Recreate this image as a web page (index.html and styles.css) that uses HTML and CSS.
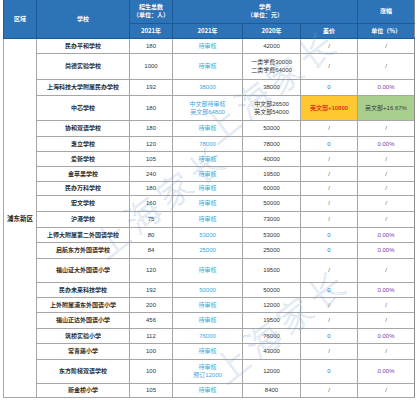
FILE: index.html
```html
<!DOCTYPE html>
<html lang="zh-CN">
<head>
<meta charset="utf-8">
<title>浦东新区民办学校学费</title>
<link rel="stylesheet" href="styles.css">
</head>
<body>
<div class="wrap">
<table class="fees">
  <colgroup>
    <col class="c-area"><col class="c-school"><col class="c-num"><col class="c-f21"><col class="c-f20"><col class="c-diff"><col class="c-rate">
  </colgroup>
  <thead>
    <tr class="h1">
      <th rowspan="2">区域</th>
      <th rowspan="2">学校</th>
      <th>招生总数<br>（单位：人）</th>
      <th colspan="3">学费<br>（单位：元）</th>
      <th>涨幅</th>
    </tr>
    <tr class="h2">
      <th>2021年</th>
      <th>2021年</th>
      <th>2020年</th>
      <th>差价</th>
      <th>单位（%）</th>
    </tr>
  </thead>
  <tbody>
    <tr class="r15">
      <td class="area" rowspan="21">浦东新区</td>
      <td class="sch">民办平和学校</td><td>180</td><td class="f21">待审核</td><td>42000</td><td class="na">/</td><td class="na">/</td>
    </tr>
    <tr class="r26">
      <td class="sch">尚德实验学校</td><td>1000</td><td class="f21">待审核</td><td>一类学费30000<br>二类学费64000</td><td class="na">/</td><td class="na">/</td>
    </tr>
    <tr class="r16">
      <td class="sch">上海科技大学附属民办学校</td><td>192</td><td class="f21">38000</td><td>38000</td><td class="zero">0</td><td class="pct">0.00%</td>
    </tr>
    <tr class="r25">
      <td class="sch">中芯学校</td><td>180</td><td class="f21">中文部待审核<br>英文部64800</td><td>中文部26500<br>英文部54000</td><td class="up">英文部+10800</td><td class="upr">英文部+16.67%</td>
    </tr>
    <tr class="r16">
      <td class="sch">协和双语学校</td><td>180</td><td class="f21">待审核</td><td>50000</td><td class="na">/</td><td class="na">/</td>
    </tr>
    <tr class="r15">
      <td class="sch">惠立学校</td><td>120</td><td class="f21">78000</td><td>78000</td><td class="zero">0</td><td class="pct">0.00%</td>
    </tr>
    <tr class="r15">
      <td class="sch">爱新学校</td><td>105</td><td class="f21">待审核</td><td>40000</td><td class="na">/</td><td class="na">/</td>
    </tr>
    <tr class="r15">
      <td class="sch">金苹果学校</td><td>240</td><td class="f21">待审核</td><td>19500</td><td class="na">/</td><td class="na">/</td>
    </tr>
    <tr class="r14">
      <td class="sch">民办万科学校</td><td>180</td><td class="f21">待审核</td><td>60000</td><td class="na">/</td><td class="na">/</td>
    </tr>
    <tr class="r16">
      <td class="sch">宏文学校</td><td>160</td><td class="f21">待审核</td><td>50000</td><td class="na">/</td><td class="na">/</td>
    </tr>
    <tr class="r16">
      <td class="sch">沪港学校</td><td>75</td><td class="f21">待审核</td><td>73000</td><td class="na">/</td><td class="na">/</td>
    </tr>
    <tr class="r15">
      <td class="sch">上师大附属第二外国语学校</td><td>80</td><td class="f21">53000</td><td>53000</td><td class="zero">0</td><td class="pct">0.00%</td>
    </tr>
    <tr class="r16">
      <td class="sch">启航东方外国语学校</td><td>84</td><td class="f21">25000</td><td>25000</td><td class="zero">0</td><td class="pct">0.00%</td>
    </tr>
    <tr class="r24">
      <td class="sch">福山证大外国语小学</td><td>120</td><td class="f21">待审核</td><td>19500</td><td class="na">/</td><td class="na">/</td>
    </tr>
    <tr class="r15">
      <td class="sch">民办未来科技学校</td><td>192</td><td class="f21">50000</td><td>50000</td><td class="zero">0</td><td class="pct">0.00%</td>
    </tr>
    <tr class="r15">
      <td class="sch">上外附属浦东外国语小学</td><td>200</td><td class="f21">待审核</td><td>12000</td><td class="na">/</td><td class="na">/</td>
    </tr>
    <tr class="r16">
      <td class="sch">福山正达外国语小学</td><td>456</td><td class="f21">待审核</td><td>19500</td><td class="na">/</td><td class="na">/</td>
    </tr>
    <tr class="r15">
      <td class="sch">筑桥实验小学</td><td>112</td><td class="f21">76000</td><td>76000</td><td class="zero">0</td><td class="pct">0.00%</td>
    </tr>
    <tr class="r16">
      <td class="sch">常青藤小学</td><td>100</td><td class="f21">待审核</td><td>43000</td><td class="na">/</td><td class="na">/</td>
    </tr>
    <tr class="r24">
      <td class="sch">东方阶梯双语学校</td><td>100</td><td class="f21">待审核<br>预订12000</td><td>12000</td><td class="zero">0</td><td class="pct">0.00%</td>
    </tr>
    <tr class="r14">
      <td class="sch">新金桥小学</td><td>105</td><td class="f21">待审核</td><td>8400</td><td class="na">/</td><td class="na">/</td>
    </tr>
  </tbody>
</table>
<div class="wm wm1">上海家长</div>
<div class="wm wm2">上海家长</div>
<div class="wm wm3">上海家长</div>
</div>
</body>
</html>
```

FILE: styles.css
```css
html, body {
  margin: 0;
  padding: 0;
  background: #ffffff;
}

.wrap {
  position: relative;
  width: 417px;
  height: 400px;
  overflow: hidden;
  padding-left: 3px;
  box-sizing: border-box;
}

.fees {
  border-collapse: collapse;
  table-layout: fixed;
  width: 411px;
  font-family: "Liberation Sans", "Noto Sans CJK SC", sans-serif;
  font-size: 6px;
  line-height: 8px;
  color: #333333;
  text-align: center;
  border-bottom: 1px solid #9a9a9a;
}

.c-area { width: 33px; }
.c-school { width: 93px; }
.c-num { width: 43px; }
.c-f21 { width: 70px; }
.c-f20 { width: 58px; }
.c-diff { width: 57px; }
.c-rate { width: 57px; }

.fees th {
  background: #2d73b8;
  color: #ffffff;
  font-weight: bold;
  font-family: "Noto Sans CJK SC", "Liberation Sans", sans-serif;
  font-size: 6px;
  line-height: 8px;
  border: 1px solid #1d5a96;
  padding: 0;
  vertical-align: middle;
}

.fees thead tr.h1 th {
  border-top: none;
}

.h1 { height: 23px; }
.h2 { height: 15px; }

.fees td {
  border: 1px solid #a6a6a6;
  padding: 0;
  vertical-align: middle;
  white-space: nowrap;
}

.r14 { height: 14px; }
.r15 { height: 15px; }
.r16 { height: 16px; }
.r24 { height: 24px; }
.r25 { height: 25px; }
.r26 { height: 26px; }

.area {
  font-family: "Noto Sans CJK SC", sans-serif;
  font-weight: bold;
  font-size: 6.5px;
  color: #222222;
  border-left: 1px solid #777777;
}

.sch {
  font-family: "Noto Sans CJK SC", sans-serif;
  font-weight: bold;
  color: #2a2a2a;
}

.f21 {
  color: #3aa6de;
}

.na {
  color: #555555;
}

.zero {
  color: #2e75b6;
}

.pct {
  color: #7a3aa8;
}

.up {
  background: #ffc830;
  color: #e03a1a;
  font-weight: bold;
}

.upr {
  background: #a9cf8e;
  color: #3a3a3a;
}

.fees td:last-child,
.fees th:last-child {
  border-right: 1px solid #8a8a8a;
}

.wm {
  position: absolute;
  font-family: "Noto Sans CJK SC", sans-serif;
  font-size: 34px;
  font-weight: 300;
  color: rgba(120, 165, 210, 0.10);
  -webkit-text-stroke: 0.6px rgba(120, 160, 205, 0.35);
  white-space: nowrap;
  pointer-events: none;
  transform: rotate(-38deg);
  letter-spacing: 6px;
}

.wm1 { left: 190px; top: 60px; }
.wm2 { left: 80px; top: 175px; }
.wm3 { left: 200px; top: 300px; }
```
